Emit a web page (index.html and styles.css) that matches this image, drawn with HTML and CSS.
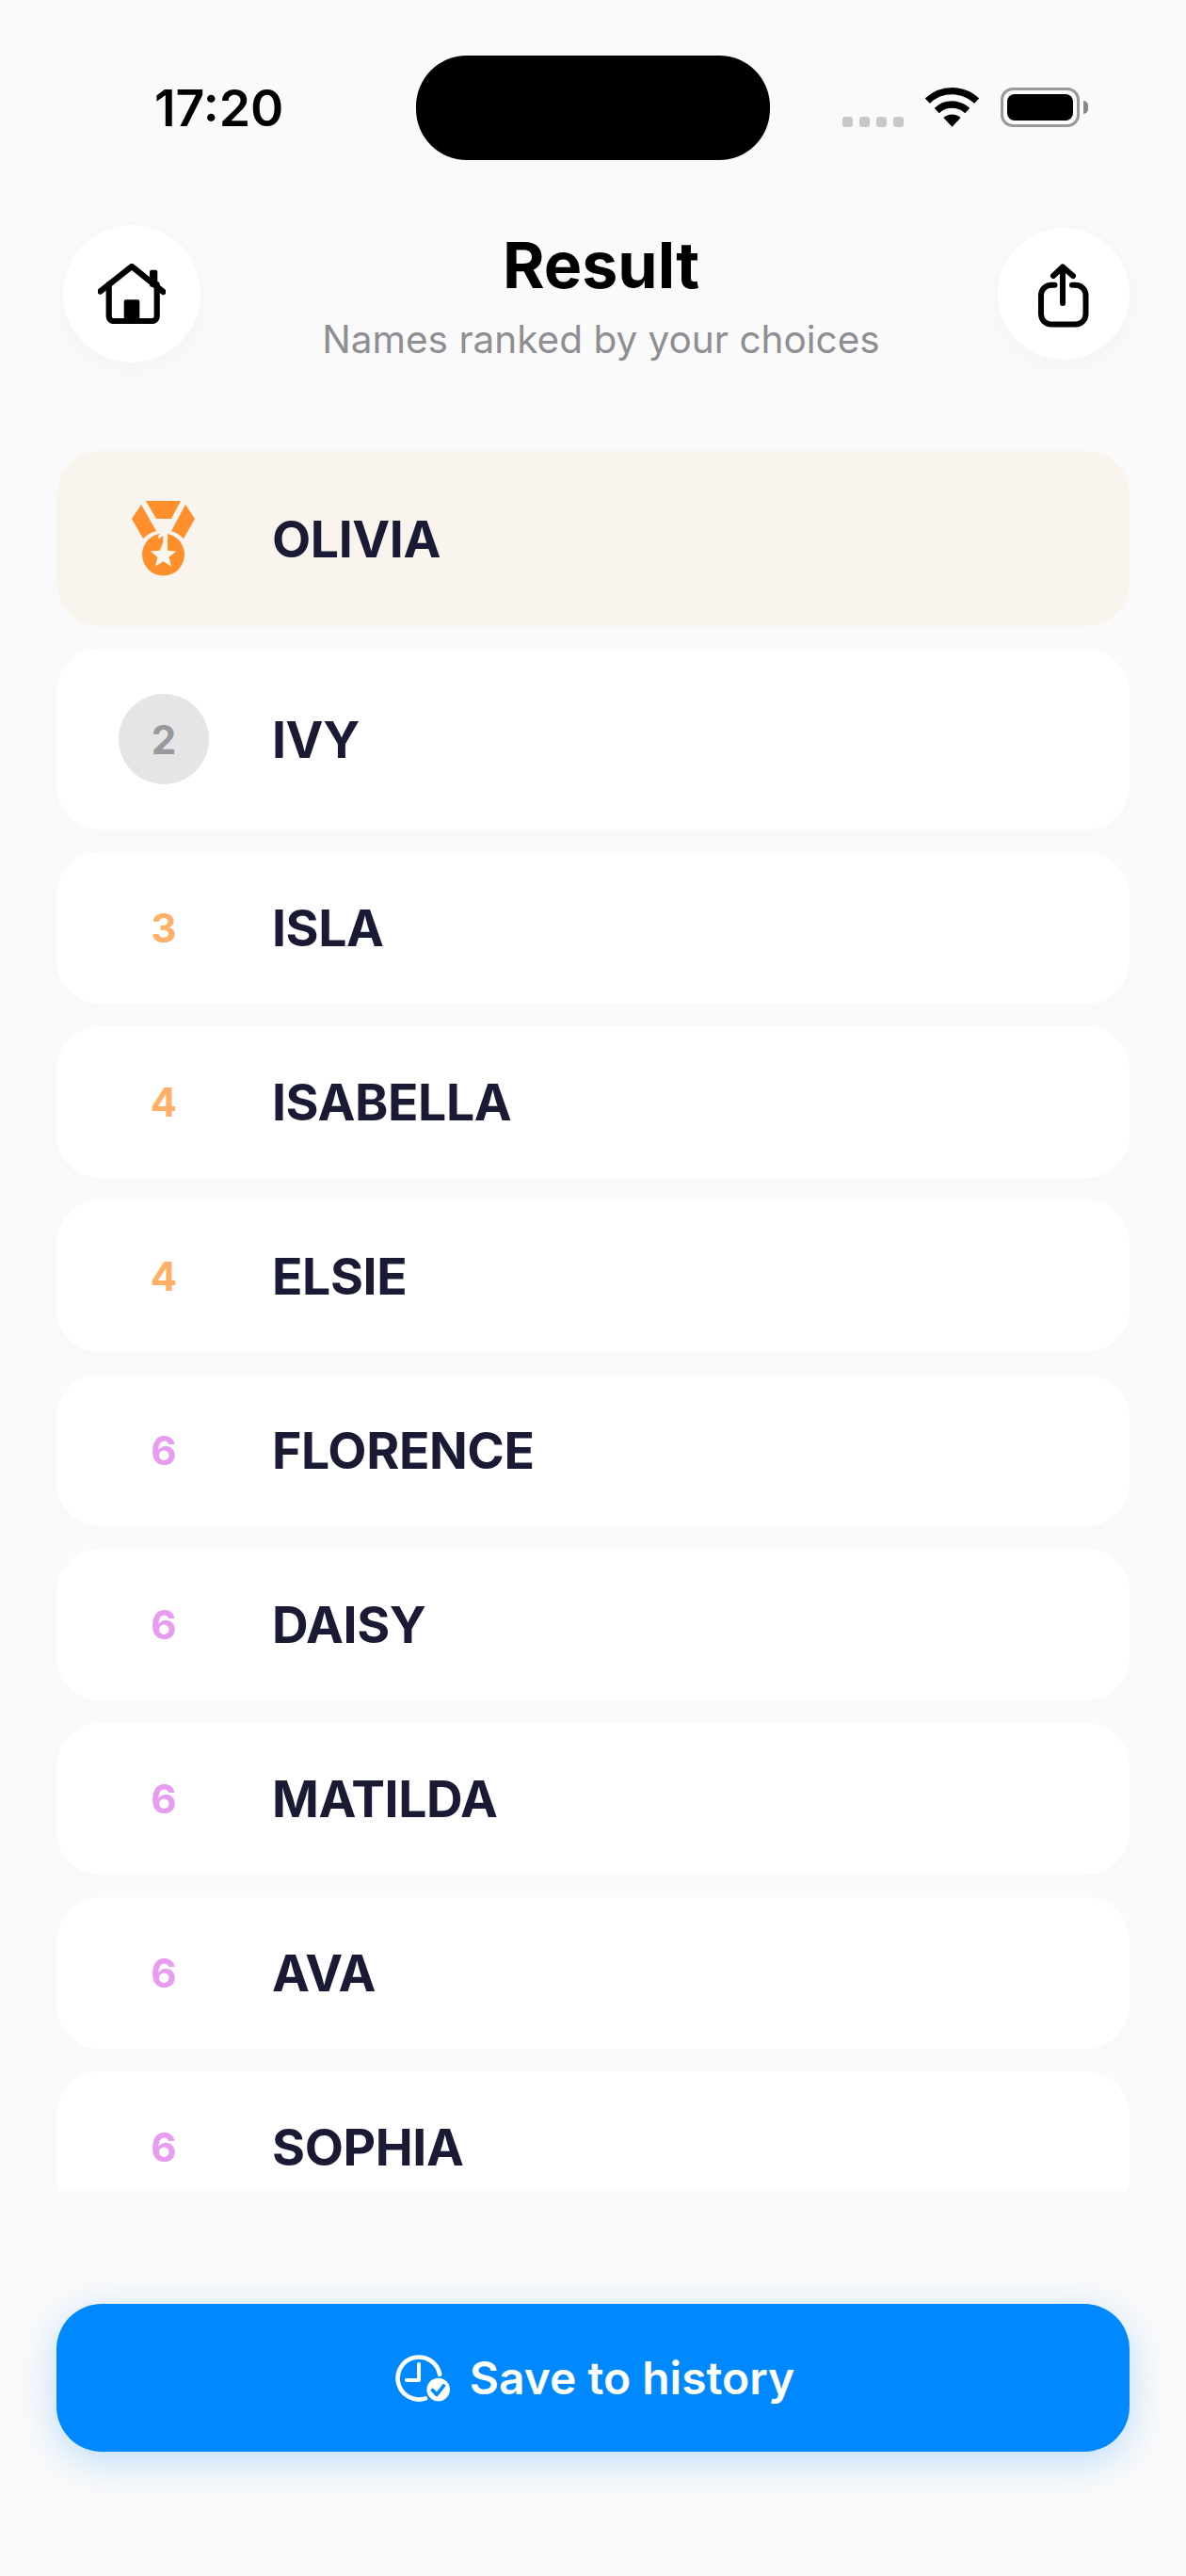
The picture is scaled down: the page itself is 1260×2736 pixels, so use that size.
FILE: index.html
```html
<!DOCTYPE html>
<html>
<head>
  <title>Result</title>
  <meta name="viewport" content="width=device-width, initial-scale=1">
  <link rel="stylesheet" href="styles.css">
</head>
<body>
  <div class="screen">
    <div class="statusbar">
      <span class="time">17:20</span>
      <div class="island"></div>
      <div class="status-icons">
        <div class="signal"><i></i><i></i><i></i><i></i></div>
        <svg class="wifi" width="57" height="42" viewBox="0 0 57 42">
          <path d="M2.35 14.14A38 38 0 0 1 54.65 14.14M12.2 24.5A23.7 23.7 0 0 1 44.8 24.5" fill="none" stroke="#000" stroke-width="7.3"/>
          <path d="M28.5 41.7L19.35 32.06A13.3 13.3 0 0 1 37.65 32.06Z" fill="#000"/>
        </svg>
        <div class="battery"><div class="battery-level"></div></div>
        <div class="battery-nub"></div>
      </div>
    </div>

    <div class="header">
      <button class="round-btn home-btn">
        <svg width="72" height="64" viewBox="0 0 72 64" fill="none" stroke="#000" stroke-width="6.2" stroke-linecap="round" stroke-linejoin="round">
          <path d="M2.5 29.5L36 3L69.5 30"/>
          <path d="M11.7 22V56a5 5 0 0 0 5 5H57.7a5 5 0 0 0 5 -5V22"/>
          <rect x="27.7" y="38.3" width="16.6" height="23" rx="2" fill="#000" stroke="none"/>
          <rect x="55" y="6.7" width="8.3" height="18" rx="2" fill="#000" stroke="none"/>
        </svg>
      </button>
      <div class="title-block">
        <h1>Result</h1>
        <p>Names ranked by your choices</p>
      </div>
      <button class="round-btn share-btn">
        <svg width="54" height="68" viewBox="0 0 54 68" fill="none" stroke="#000" stroke-width="6" stroke-linecap="round" stroke-linejoin="round">
          <path d="M17.5 22.7H14a11 11 0 0 0 -11 11V53.5a11 11 0 0 0 11 11H39.5a11 11 0 0 0 11 -11V33.7a11 11 0 0 0 -11 -11H36"/>
          <path d="M26 3.5V42M16 13L26 3.5L37 13"/>
        </svg>
      </button>
    </div>

    <div class="list">
      <div class="row row-first">
        <div class="rank">
          <div class="medal">
            <svg width="68" height="80" viewBox="0 0 68 80">
              <path d="M15 0H52L42 19H26Z" fill="#ff8f2b"/>
              <path d="M10 4L0 19L12 40Q18 34 26 32Z" fill="#ff8f2b"/>
              <path d="M57 4L67 19L55 40Q49 34 42 32Z" fill="#ff8f2b"/>
              <circle cx="33.5" cy="57" r="22.5" fill="#ff8f2b"/>
              <path d="M33.5 43.5L37.3 52.7L47.2 53.4L39.6 59.8L42 69.5L33.5 64.2L25 69.5L27.4 59.8L19.8 53.4L29.7 52.7Z" fill="#fdf6ef"/>
            </svg>
            <span class="medal-num">1</span>
          </div>
        </div>
        <span class="name">OLIVIA</span>
      </div>
      <div class="row row-second">
        <div class="rank"><span class="silver">2</span></div>
        <span class="name">IVY</span>
      </div>
      <div class="row">
        <div class="rank"><span class="num orange">3</span></div>
        <span class="name">ISLA</span>
      </div>
      <div class="row">
        <div class="rank"><span class="num orange">4</span></div>
        <span class="name">ISABELLA</span>
      </div>
      <div class="row">
        <div class="rank"><span class="num orange">4</span></div>
        <span class="name">ELSIE</span>
      </div>
      <div class="row">
        <div class="rank"><span class="num pink">6</span></div>
        <span class="name">FLORENCE</span>
      </div>
      <div class="row">
        <div class="rank"><span class="num pink">6</span></div>
        <span class="name">DAISY</span>
      </div>
      <div class="row">
        <div class="rank"><span class="num pink">6</span></div>
        <span class="name">MATILDA</span>
      </div>
      <div class="row">
        <div class="rank"><span class="num pink">6</span></div>
        <span class="name">AVA</span>
      </div>
      <div class="row">
        <div class="rank"><span class="num pink">6</span></div>
        <span class="name">SOPHIA</span>
      </div>
    </div>

    <div class="footer">
      <button class="save-btn">
        <svg width="58" height="50" viewBox="0 0 58 50" fill="none">
          <path d="M47.2 21A22.5 22.5 0 1 0 32 46.4" stroke="#fff" stroke-width="4.6" stroke-linecap="round"/>
          <path d="M25 10V27H12" stroke="#fff" stroke-width="4" stroke-linecap="round" stroke-linejoin="round"/>
          <circle cx="45.7" cy="37" r="12.3" fill="#fff"/>
          <path d="M39.5 37.6L44 42.4L51.4 32.9" stroke="#0088ff" stroke-width="3.6" stroke-linecap="round" stroke-linejoin="round"/>
        </svg>
        Save to history
      </button>
    </div>
  </div>
</body>
</html>
```

FILE: styles.css
```css
* {
  box-sizing: border-box;
}

body {
  margin: 0;
  font-family: Inter, "Liberation Sans", sans-serif;
  background-color: #fafafa;
}

.screen {
  width: 1260px;
  height: 2736px;
  overflow: hidden;
  background-color: #fafafa;
}

/* status bar */
.statusbar {
  display: grid;
  grid-template-columns: 442px 376px 1fr;
  height: 170px;
  padding-top: 59px;
}

.time {
  padding: 24px 0 0 164px;
  font-size: 53.5px;
  line-height: 64px;
  font-weight: 600;
  color: #000;
}

.island {
  height: 111px;
  background-color: #000;
  border-radius: 54px;
}

.status-icons {
  display: flex;
  align-items: flex-end;
  height: 76px;
  padding-left: 77px;
}

.signal {
  display: flex;
  gap: 7px;
  margin-right: 23px;
}

.signal i {
  width: 11px;
  height: 11px;
  background-color: #c8c8c8;
  border-radius: 3px;
}

.wifi {
  margin-right: 23px;
}

.battery {
  width: 84px;
  height: 42px;
  padding: 4px;
  border: 3px solid #999;
  border-radius: 13px;
}

.battery-level {
  height: 100%;
  background-color: #000;
  border-radius: 8px;
}

.battery-nub {
  width: 5px;
  height: 14px;
  margin: 0 0 14px 4px;
  background-color: #888;
  border-radius: 0 5px 5px 0;
}

/* header */
.header {
  display: flex;
  align-items: center;
  height: 146px;
  margin-top: 69px;
  padding: 0 60px 0 67px;
}

.round-btn {
  display: flex;
  align-items: center;
  justify-content: center;
  padding: 0;
  border: none;
  border-radius: 50%;
  background-color: #fff;
  box-shadow: 0 6px 30px rgba(0, 0, 0, 0.03);
}

.home-btn {
  width: 146px;
  height: 146px;
}

.share-btn {
  width: 140px;
  height: 140px;
  padding-top: 3px;
}

.title-block {
  flex: 1;
  padding: 3px 0 0 4px;
  text-align: center;
}

.title-block h1 {
  margin: 0;
  font-size: 68px;
  line-height: 80px;
  font-weight: 700;
  color: #000;
}

.title-block p {
  margin: 15px 0 0;
  font-size: 40.5px;
  line-height: 50px;
  color: #8e8e93;
}

/* ranked list */
.list {
  display: flex;
  flex-direction: column;
  gap: 24px;
  height: 1848px;
  margin-top: 94px;
  padding: 0 60px;
  overflow: hidden;
}

.row {
  display: flex;
  flex-shrink: 0;
  align-items: center;
  height: 161px;
  padding-left: 66px;
  background-color: #fff;
  border-radius: 46px;
  box-shadow: 0 4px 24px rgba(0, 0, 0, 0.01);
}

.row-first {
  height: 186px;
  background-color: #f9f4ee;
  box-shadow: none;
}

.row-second {
  height: 192px;
}

.rank {
  display: flex;
  align-items: center;
  justify-content: center;
  flex-shrink: 0;
  width: 96px;
  margin-right: 67px;
}

.name {
  font-size: 53.5px;
  font-weight: 700;
  letter-spacing: -0.4px;
  text-rendering: optimizeLegibility;
  color: #1a1a35;
}

.num {
  font-size: 42px;
  font-weight: 700;
}

.orange {
  color: #ffb066;
}

.pink {
  color: #e89cf0;
}

.silver {
  display: flex;
  align-items: center;
  justify-content: center;
  width: 96px;
  height: 96px;
  font-size: 42px;
  font-weight: 700;
  color: #98989d;
  background-color: #e5e5e5;
  border-radius: 50%;
}

.medal {
  position: relative;
  display: flex;
  width: 68px;
  height: 80px;
}

.medal-num {
  position: absolute;
  top: 26px;
  left: 0;
  width: 67px;
  font-size: 30px;
  line-height: 36px;
  font-weight: 700;
  text-align: center;
  color: #fdf6ef;
}

/* save button */
.footer {
  margin-top: 120px;
  padding: 0 60px;
}

.save-btn {
  display: flex;
  align-items: center;
  justify-content: center;
  gap: 21px;
  width: 100%;
  height: 157px;
  padding: 0 0 0 4px;
  border: none;
  border-radius: 48px;
  background-color: #0088ff;
  box-shadow: 0 10px 44px rgba(0, 136, 255, 0.25);
  font-family: inherit;
  font-size: 48px;
  font-weight: 600;
  color: #fff;
}
```
